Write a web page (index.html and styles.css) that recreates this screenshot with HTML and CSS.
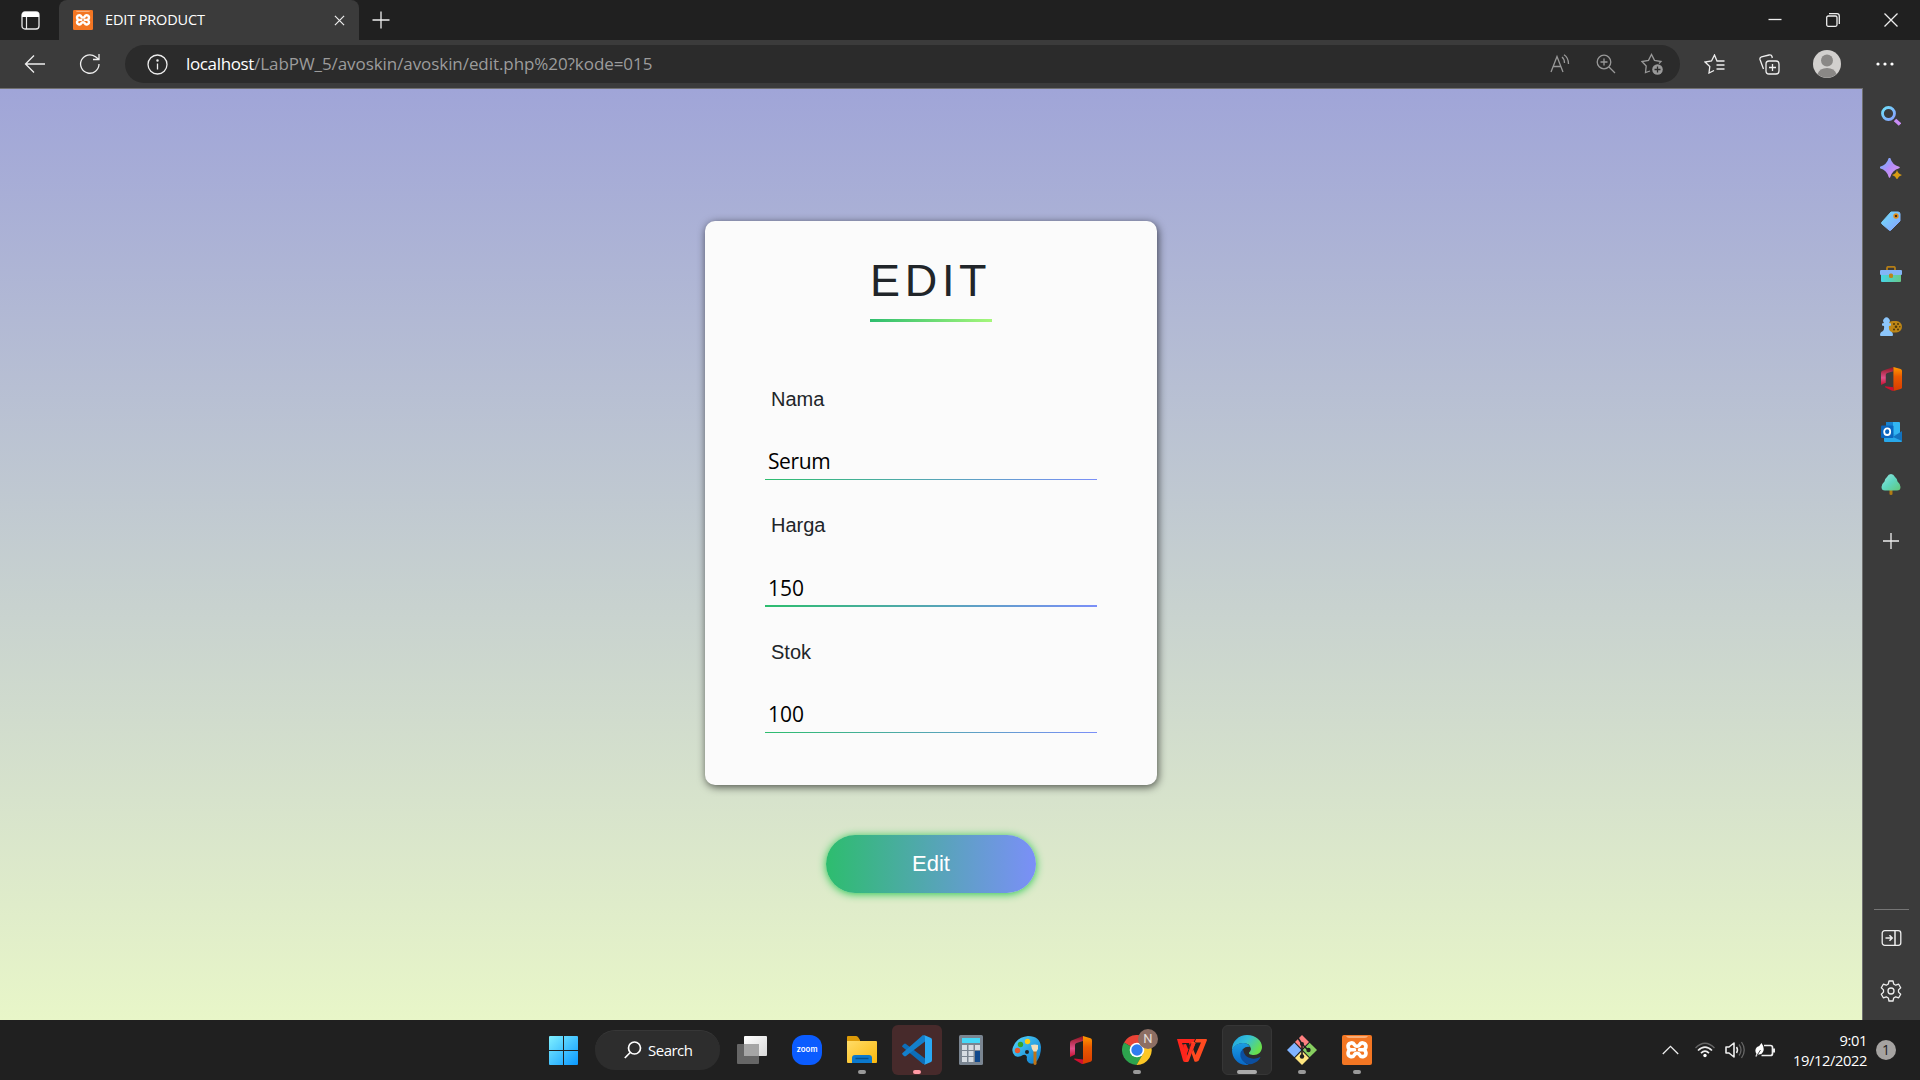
FILE: index.html
```html
<!DOCTYPE html>
<html lang="id">
<head>
<meta charset="utf-8">
<title>EDIT PRODUCT</title>
<link rel="stylesheet" href="styles.css">
</head>
<body>
<svg class="defs" width="0" height="0" aria-hidden="true">
  <defs>
    <linearGradient id="blue" x1="0" y1="0" x2="1" y2="1"><stop offset="0" stop-color="#6fe0fa"/><stop offset="1" stop-color="#88a0ff"/></linearGradient>
    <linearGradient id="violet" x1="0" y1="0" x2="1" y2="1"><stop offset="0" stop-color="#5cc0ff"/><stop offset=".5" stop-color="#b58cf8"/><stop offset="1" stop-color="#e09af0"/></linearGradient>
    <linearGradient id="teal" x1="0" y1="0" x2="1" y2="0"><stop offset="0" stop-color="#45d5e8"/><stop offset="1" stop-color="#67c98a"/></linearGradient>
    <linearGradient id="tree" x1="0" y1="0" x2="1" y2="1"><stop offset="0" stop-color="#9be8e0"/><stop offset=".5" stop-color="#5fd6c0"/><stop offset="1" stop-color="#62c878"/></linearGradient>
    <linearGradient id="office-left" x1="0" y1="0" x2="0" y2="1"><stop offset="0" stop-color="#8e1420"/><stop offset=".6" stop-color="#e0508a"/><stop offset="1" stop-color="#c8102e"/></linearGradient>
    <linearGradient id="office-right" x1="0" y1="0" x2="0" y2="1"><stop offset="0" stop-color="#ff9a00"/><stop offset=".4" stop-color="#ea5a00"/><stop offset="1" stop-color="#d83b01"/></linearGradient>
    <linearGradient id="win" x1="0" y1="0" x2="1" y2="1"><stop offset="0" stop-color="#80f0ff"/><stop offset="1" stop-color="#0a98ff"/></linearGradient>
    <linearGradient id="folder" x1="0" y1="0" x2="1" y2="1"><stop offset="0" stop-color="#ffdc68"/><stop offset="1" stop-color="#fbb80c"/></linearGradient>
    <linearGradient id="edge-top" x1="0" y1="0" x2="1" y2=".5"><stop offset="0" stop-color="#1b9de2"/><stop offset=".5" stop-color="#35c1d8"/><stop offset="1" stop-color="#68e04c"/></linearGradient>
    <linearGradient id="edge-low" x1="0" y1="0" x2="0" y2="1"><stop offset="0" stop-color="#1b9de2"/><stop offset="1" stop-color="#0868c8"/></linearGradient>
    <linearGradient id="paint" x1="0" y1="0" x2="1" y2="1"><stop offset="0" stop-color="#56d8fb"/><stop offset="1" stop-color="#0878ce"/></linearGradient>
    <linearGradient id="pane" x1="0" y1="0" x2="1" y2="1"><stop offset="0" stop-color="#fff"/><stop offset="1" stop-color="#d8d8d8"/></linearGradient>
    <symbol id="office" viewBox="0 0 22 28">
      <path d="M13 0 1.500 4.500Q0 5 0 7v14l5-2.500V9q0-1.500 1.500-2L13 5z" fill="url(#office-left)"/>
      <path d="M13 0l7.500 2.300Q22 2.800 22 4.500v19q0 1.700-1.500 2.200L13 28V0z" fill="url(#office-right)"/>
      <path d="M4.500 22.500 13 23.500V28q-1 0-2-.5l-6.300-3.700q-1.200-.8-.2-1.300z" fill="#d01030"/>
    </symbol>
    <symbol id="xampp" viewBox="0 0 30 30">
      <rect width="30" height="30" rx="2" fill="#f37623"/><path d="M4 1h22q-1 2-3 2H7Q5 3 4 1z" fill="#f8ad78"/>
      <path d="M12.500 14.800H9.500a3.400 3.400 0 1 1 3-4.900q.8 1.400 2.500 1.400t2.500-1.400a3.400 3.400 0 1 1 3 4.900h-3 3a3.400 3.400 0 1 1-3 4.900q-.8-1.400-2.500-1.400t-2.500 1.400a3.400 3.400 0 1 1-3-4.900" fill="none" stroke="#fff" stroke-width="3.600" stroke-linejoin="round" stroke-linecap="round"/>
    </symbol>
  </defs>
</svg>

<header class="titlebar">
  <div class="workspace"><svg width="19" height="19" viewBox="0 0 19 19"><rect x="1" y="1" width="17" height="17" rx="3" fill="none" stroke="#e8e8e8" stroke-width="1.300"/><path d="M1 6V4q0-3 3-3h11q3 0 3 3v2z" fill="#fff"/><path d="M5.500 6v12" stroke="#e8e8e8" stroke-width="1.200"/></svg></div>
  <div class="tab">
    <svg width="20" height="20"><use href="#xampp"/></svg>
    <span class="tab-title">EDIT PRODUCT</span>
    <svg class="line" width="11" height="11" viewBox="0 0 12 12"><path d="M1 1l10 10M11 1 1 11"/></svg>
  </div>
  <div class="new-tab"><svg class="line" width="18" height="18" viewBox="0 0 18 18"><path d="M9 .5v17M.5 9h17"/></svg></div>
  <div class="window-buttons">
    <svg class="line" width="14" height="14" viewBox="0 0 14 14"><path d="M.5 6.500h13"/></svg>
    <svg class="line" width="14" height="14" viewBox="0 0 14 14"><rect x=".7" y="3" width="10.300" height="10.300" rx="1.500"/><path d="M3 .7h8q2.300 0 2.300 2.300v8"/></svg>
    <svg class="line" width="14" height="14" viewBox="0 0 14 14"><path d="M.5.5l13 13M13.500.5l-13 13"/></svg>
  </div>
</header>

<nav class="toolbar">
  <div class="nav-button"><svg class="line" width="22" height="20" viewBox="0 0 22 20"><path d="M21 10H1.500M10 1.500 1.500 10l8.500 8.500"/></svg></div>
  <div class="nav-button"><svg class="line" width="22" height="22" viewBox="0 0 22 22"><path d="M20 11A9.200 9.200 0 1 1 16.500 3.800L20 6.500M20 1v5.500h-6"/></svg></div>
  <div class="address">
    <svg class="line" width="21" height="21" viewBox="0 0 21 21"><circle cx="10.500" cy="10.500" r="9.500"/><path d="M10.500 9.500v6"/><circle cx="10.500" cy="6.500" r=".6"/></svg>
    <span class="url"><b>localhost</b>/LabPW_5/avoskin/avoskin/edit.php%20?kode=015</span>
    <div class="address-tools">
      <svg class="line" width="20" height="20" viewBox="0 0 20 20"><path d="M1 18 7 2.500 13 18M3 12.500h8M12 3q2.500 2 2.500 6M14 .8q4.500 3 4.500 9.200"/></svg>
      <svg class="line" width="20" height="20" viewBox="0 0 20 20"><circle cx="8" cy="8" r="6.800"/><path d="M13 13l6 6M8 4.500v7M4.500 8h7"/></svg>
      <svg class="line" width="22" height="22" viewBox="0 0 22 22"><path d="M9 18 4.500 19.500l.7-6.500L1 8.500 7.500 7.300 10.500 1.500 13.500 7.300 20 8.500 18 10.500"/><circle cx="16.500" cy="16.500" r="5.300" fill="#999" stroke="none"/><path d="M16.500 13.500v6M13.500 16.500h6" stroke="#2b2b2b"/></svg>
    </div>
  </div>
  <div class="nav-button"><svg class="line" width="21" height="20" viewBox="0 0 21 20"><path d="M10 16.500 5 19l.8-6.500L1 8l6.500-1L10.500 1 13 7h7.500M12.500 11h8M12.500 15h8"/></svg></div>
  <div class="nav-button"><svg class="line" width="21" height="21" viewBox="0 0 21 21"><rect x="7" y="7" width="13" height="13" rx="3"/><path d="M13.500 10v7M10 13.500h7M4.500 15 1 5.500q-.5-2 1.500-2.700L10 1q2.500-.5 3 1.500l.3 1.500"/></svg></div>
  <div class="nav-button profile"><svg width="28" height="28" viewBox="0 0 28 28"><circle cx="14" cy="14" r="14" fill="#d2d0ce"/><circle cx="14" cy="10.500" r="6" fill="#8a8886"/><path d="M4.500 24q2-6 9.500-6t9.500 6a14 14 0 0 1-19 0z" fill="#8a8886"/></svg></div>
  <div class="nav-button"><svg width="18" height="4" viewBox="0 0 18 4" fill="#fff"><circle cx="2" cy="2" r="1.600"/><circle cx="9" cy="2" r="1.600"/><circle cx="16" cy="2" r="1.600"/></svg></div>
</nav>

<div class="content">
  <main class="page">
    <form class="edit-form">
      <section class="card">
        <h1 class="card-title">EDIT</h1>
        <div class="title-rule"></div>
        <div class="fields">
          <div class="field"><label for="nama">Nama</label><input id="nama" type="text" value="Serum"><i class="rule"></i></div>
          <div class="field focused"><label for="harga">Harga</label><input id="harga" class="number" type="text" value="150"><i class="rule"></i></div>
          <div class="field"><label for="stok">Stok</label><input id="stok" class="number" type="text" value="100"><i class="rule"></i></div>
        </div>
      </section>
      <button class="submit" type="button">Edit</button>
    </form>
  </main>
  <aside class="sidebar">
    <div class="side-item"><svg width="20" height="20" viewBox="0 0 20 20"><path d="M14 14l5 4.500" stroke="#c98cf5" stroke-width="3.600"/><circle cx="7.500" cy="7.500" r="6" fill="none" stroke="url(#blue)" stroke-width="2.800"/></svg></div>
    <div class="side-item"><svg width="22" height="21" viewBox="0 0 22 21"><path d="M9.500 0q2 7.500 9.500 9.500-7.500 2-9.500 9.500Q7.500 11.500 0 9.500 7.500 7.500 9.500 0z" fill="url(#violet)" stroke="url(#violet)" stroke-width="1.500" stroke-linejoin="round"/><path d="M17 12q1 4 5 5-4 1-5 5-1-4-5-5 4-1 5-5z" fill="#d89b12"/></svg></div>
    <div class="side-item"><svg width="20" height="20" viewBox="0 0 20 20"><path d="M10 1h7q2 0 2 2v7L10 19q-1 1-2 0L1 13q-1-1 0-2z" fill="url(#blue)" stroke="url(#blue)"/><circle cx="15" cy="5" r="2" fill="#51310b" stroke="#e79018" stroke-width="1.400"/></svg></div>
    <div class="side-item"><svg width="22" height="16" viewBox="0 0 22 16"><path d="M7 4V2q0-1.200 1.500-1.200h5Q15 .8 15 2v2" fill="none" stroke="#b47d17" stroke-width="1.800"/><path d="M1 8h20v7q0 1-1 1H2q-1 0-1-1z" fill="url(#teal)"/><rect y="4" width="22" height="5" rx="1" fill="#83b5f7"/><rect x="9" y="7.500" width="4" height="4.500" rx="1.500" fill="#bc8618"/></svg></div>
    <div class="side-item"><svg width="22" height="19" viewBox="0 0 22 19"><rect x="7" y="4" width="15" height="11.500" rx="5.700" fill="#bd8616"/><g fill="#503808"><circle cx="16" cy="9.700" r="1.300"/><circle cx="14" cy="7" r="1"/><circle cx="18" cy="7" r="1"/><circle cx="14" cy="12.500" r="1"/><circle cx="18" cy="12.500" r="1"/><circle cx="19.800" cy="9.700" r=".8"/></g><path d="M0 18q0-3 3-4 1.500-2 1-5L2 8.500V6.500L4 6a3.300 3.300 0 1 1 5 0l2 .5v2L9 9q-.5 3 1 5 3 1 3 4 0 1-1 1H1q-1 0-1-1z" fill="#8cc6fb"/></svg></div>
    <div class="side-item"><svg width="21" height="24" viewBox="0 0 22 28" preserveAspectRatio="none"><use href="#office" width="22" height="28"/></svg></div>
    <div class="side-item"><svg width="21" height="20" viewBox="0 0 21 20"><rect x="5" width="14" height="12" rx="1" fill="#32b5f2"/><path d="M5 0h7v6H5z" fill="#1682d0"/><path d="M3 12h18v7q0 1-1 1H4q-1 0-1-1z" fill="#28a8ea"/><path d="M12 15l9-6v10z" fill="#1272be"/><rect y="3.500" width="12.500" height="12.500" rx="1" fill="#0b65bd"/><ellipse cx="6.200" cy="9.700" rx="3" ry="3.300" fill="none" stroke="#fff" stroke-width="1.800"/></svg></div>
    <div class="side-item"><svg width="20" height="21" viewBox="0 0 20 21"><path d="M8.500 15h3v5q0 1-1.500 1t-1.500-1z" fill="#b17b12"/><path d="M10 0q2.500 0 4 3 2.500 2 2.500 4.500Q19.500 10 19.500 13q0 3.500-3.500 3.500H4Q.5 16.500.5 13q0-3 3-5.500Q3.500 5 6 3q1.500-3 4-3z" fill="url(#tree)"/></svg></div>
    <div class="side-item add"><svg class="line" width="16" height="16" viewBox="0 0 16 16"><path d="M8 0v16M0 8h16"/></svg></div>
    <div class="side-bottom">
      <div class="side-item"><svg class="line" width="21" height="16" viewBox="0 0 20 16"><rect x=".7" y=".7" width="18.600" height="14.600" rx="2.500"/><path d="M13.500 1v14M4 8h6.500M8 5.300 10.700 8 8 10.700" stroke-width="1.500"/></svg></div>
      <div class="side-item"><svg class="line" width="22" height="22" viewBox="0 0 22 22"><path d="M9 1h4l.7 3 2 1.200 3-1 2 3.500-2.200 2.200v2.200l2.200 2.200-2 3.500-3-1-2 1.200-.7 3H9l-.7-3-2-1.200-3 1-2-3.500 2.200-2.200V9.900L1.300 7.700l2-3.500 3 1 2-1.200z" stroke-linejoin="round"/><circle cx="11" cy="11" r="3"/></svg></div>
    </div>
  </aside>
</div>

<footer class="taskbar">
  <div class="start"><svg width="29" height="29" viewBox="0 0 29 29"><path d="M1 0h13v14H0V1q0-1 1-1zM15 0h13q1 0 1 1v13H15zM0 15h14v14H1q-1 0-1-1zM15 15h14v13q0 1-1 1H15z" fill="url(#win)"/></svg></div>
  <div class="search"><svg width="18" height="18" viewBox="0 0 18 18" fill="none" stroke="#fff" stroke-width="1.700"><circle cx="10.500" cy="7" r="6"/><path d="M6.200 11.500.8 17"/></svg><span>Search</span></div>
  <div class="apps">
    <div class="app"><svg width="30" height="28" viewBox="0 0 30 28"><rect y="8" width="22" height="20" rx="1" fill="#666"/><rect x="7" width="23" height="20" rx="1" fill="url(#pane)"/><path d="M7 8h15v12H7z" fill="#a5a5a5"/></svg></div>
    <div class="app"><svg width="30" height="30" viewBox="0 0 30 30"><rect width="30" height="30" rx="12" fill="#0b5cff"/><text x="15" y="17" class="zoom-word" text-anchor="middle" textLength="21" lengthAdjust="spacingAndGlyphs">zoom</text></svg></div>
    <div class="app"><svg width="30" height="28" viewBox="0 0 30 28"><path d="M0 1q0-1 1-1h8q1 0 2 1l2 3v5H0z" fill="#dc9a08"/><path d="M0 5h29q1 0 1 1v20q0 1-1 1H1q-1 0-1-1z" fill="url(#folder)"/><path d="M5 27v-5q0-3 3-3h14q3 0 3 3v5z" fill="#0b79cd"/><path d="M8.500 22.500h13" stroke="#05508c" stroke-width="1.500"/></svg><i class="mark"></i></div>
    <div class="app alert"><svg width="30" height="30" viewBox="0 0 30 30"><path d="M.5 10.500 2 9q1-.8 2 0L23 23.500V29L21 29 .5 12q-.8-.8 0-1.500z" fill="#0d6eb8"/><path d="M.5 19.500 2 21q1 .8 2 0L23 6.500V1L21 0 .5 18q-.8.8 0 1.500z" fill="#1480cc"/><path d="M22 0l7 3q1 .5 1 2v20q0 1.500-1 2l-7 3q1-1 1-3V3q0-2-1-3z" fill="#29a8f4"/></svg><i class="mark"></i></div>
    <div class="app calculator"><svg width="24" height="30" viewBox="0 0 24 30"><rect width="24" height="30" rx="1.500" fill="#7a8591"/><path d="M3 3h18v5H3z" fill="#45d8f8"/><path d="M3 10h5v5H3zM9.500 10h5v5h-5zM16 10h5v5h-5zM3 16h5v5H3zM9.500 16h5v5h-5zM3 22h5v5H3zM9.500 22h5v5h-5z" fill="#d7dde3"/><path d="M16 16h5v11h-5z" fill="#11498c"/></svg></div>
    <div class="app"><svg width="30" height="30" viewBox="0 0 30 30"><path d="M16 1q12 0 13 11 0 8-4 14-3 4-8 2-3-2-2-6-1-3-4-2-4 3-8 1-4-4-2-9Q5 2 16 1z" fill="url(#paint)"/><circle cx="15.500" cy="6.500" r="2.700" fill="#ffcd12"/><circle cx="8.500" cy="9.500" r="2.700" fill="#35a52c"/><circle cx="5.500" cy="15.500" r="2.700" fill="#e8582c"/><circle cx="15" cy="17" r="2" fill="#202020"/><path d="M21.500 16h3v13q-1.500 2-3 0z" fill="#bf7416"/><path d="M19 10q4-1 7 0v4l-1.500 2.500h-3L20 14z" fill="#f3dfba"/></svg></div>
    <div class="app office-app"><svg width="22" height="28"><use href="#office"/></svg></div>
    <div class="app"><svg width="30" height="30" viewBox="0 0 30 30"><path d="M15 15 2 7.500A15 15 0 0 1 28 7.500z" fill="#ea4335"/><path d="M15 15 2 7.500A15 15 0 0 0 14.500 30l6-10z" fill="#2da44e"/><path d="M15 8h13a15 15 0 0 1-13.500 22l7-12z" fill="#fcc726"/><circle cx="15" cy="15" r="7.300" fill="#fff"/><circle cx="15" cy="15" r="5.700" fill="#2f7cf0"/></svg><span class="account">N</span><i class="mark"></i></div>
    <div class="app"><svg width="30" height="23" viewBox="0 0 30 23"><path d="M0 0h18l-1.500 3.500H14L9.500 16 6 5.500 9 5l2.500 6L13 7 12 4H5l7 16-2 3H8q-1.500 0-2-1.500z" fill="#ff241c"/><path d="M14 3h5l-4.500 11 3 8.500q1 .5 2.500 0 1.500-.5 2-1.500L30 1q0-1-1-1H19l-1.500 3.500H24L18.500 16l-2-5z" fill="#ff4a20"/><path d="M14.500 4h4L12 21.500q-.5 1.500-2 1.500H8z" fill="#ff3520"/></svg></div>
    <div class="app active"><svg width="30" height="30" viewBox="0 0 30 30"><path d="M0 15C0 6 7 0 15 0c9 0 15 6 15 12 0 5-4 8-8 8-4 0-5-1-5-2s2-2 2-4q-1-6-8-6Q4 8 0 15z" fill="url(#edge-top)"/><path d="M0 15Q3 8 11 8q5 0 7 4-4-1-7 2-3 4-1 9 2 5 7 7C7 31 0 24 0 15z" fill="url(#edge-low)"/><path d="M11 14q-5 5-1 11 4 5 10 4 6-2 8.500-6.500-.5-.8-1.500 0-3 1.500-7 1-8-1-9-9.500z" fill="#0c4fa0"/></svg><i class="mark"></i></div>
    <div class="app"><svg width="30" height="30" viewBox="0 0 30 30"><path d="M15 0l7 7-7 7-7-7z" fill="#ff8080"/><path d="M7.300 7.700l7 7.300-7 7.300L0 15z" fill="#80b3ff"/><path d="M22.700 7.700 30 15l-7.300 7.300-7-7.300z" fill="#87cf60"/><path d="M15 16l7 7-7 7-7-7z" fill="#ffe680"/><path d="M11 3l4 6v12M15 9l6 6" fill="none" stroke="#202020" stroke-width="1.600"/><g fill="#202020"><circle cx="15" cy="9" r="2"/><circle cx="21.500" cy="15" r="2.200"/><circle cx="15" cy="21.500" r="2.200"/></g></svg><i class="mark"></i></div>
    <div class="app"><svg width="30" height="30"><use href="#xampp"/></svg><i class="mark"></i></div>
  </div>
  <div class="tray">
    <svg class="line chevron" width="17" height="10" viewBox="0 0 17 10"><path d="M.8 9 8.500 1.300 16.200 9"/></svg>
    <svg class="line wifi" width="20" height="16" viewBox="0 0 20 16"><path d="M.5 6q9.500-9.500 19 0" stroke="#666"/><path d="M3 8.500q7-7 14 0M6 11.200q4-4 8 0" stroke-width="1.700"/><circle cx="10" cy="13.500" r="1.700" fill="#fff" stroke="none"/></svg>
    <svg class="line sound" width="20" height="18" viewBox="0 0 20 18"><path d="M1 6h3l5-4v14l-5-4H1z" stroke-width="1.600" stroke-linejoin="round"/><path d="M11.500 6q2 3 0 6" stroke-width="1.500"/><path d="M14 3.500q4 5.500 0 11M16.500 1q5.500 8 0 16" stroke="#666"/></svg>
    <svg class="line battery" width="20" height="15" viewBox="0 0 20 15"><path d="M9 2.500h6.500q2 0 2 2v6q0 2-2 2H6.500" stroke-width="1.700"/><path d="M19 5.500v4" stroke-width="2"/><path d="M6.500 0q3.500 5 1.500 9-1.500 3-5 2.500L1 14q-1-1 .5-3Q-1 7 2 4q3-1 4.500-4z" fill="#fff" stroke="none"/><path d="M2 12.500l3.500-5.500" stroke="#202020" stroke-width=".8"/></svg>
    <div class="clock"><span>9:01</span><span>19/12/2022</span></div>
    <span class="notice">1</span>
  </div>
</footer>
</body>
</html>
```
FILE: styles.css
```css
* { box-sizing: border-box; }
body {
  margin: 0;
  width: 1920px;
  height: 1080px;
  overflow: hidden;
  display: flex;
  flex-direction: column;
  background: #3b3b3b;
  color: #fff;
  font-family: "Open Sans", "Noto Sans", sans-serif;
}
svg { display: block; flex: none; }
.defs { position: absolute; }
.line { fill: none; stroke: #eee; stroke-width: 1.3; }

/* Window title bar */
.titlebar { height: 40px; flex: none; display: flex; background: #202020; }
.workspace { width: 59px; padding-left: 1px; display: flex; align-items: center; justify-content: center; }
.tab {
  width: 300px;
  padding: 0 14px;
  display: flex;
  align-items: center;
  background: #3b3b3b;
  border-radius: 8px 8px 0 0;
}
.tab-title { margin-left: 12px; padding-bottom: 2px; flex: 1; font-size: 14.5px; letter-spacing: -0.15px; white-space: nowrap; }
.new-tab { width: 43px; display: flex; align-items: center; justify-content: center; }
.window-buttons { margin-left: auto; padding-right: 22px; display: flex; align-items: center; gap: 44px; }

/* Navigation toolbar */
.toolbar { height: 48px; flex: none; display: flex; align-items: center; padding: 0 7px; }
.nav-button { width: 55px; display: flex; align-items: center; justify-content: center; }
.profile { width: 60px; }
.address {
  width: 1555px;
  height: 38px;
  margin: 0 7px 0 8px;
  padding: 0 5px 0 22px;
  display: flex;
  align-items: center;
  background: #2b2b2b;
  border-radius: 19px;
}
.url { margin-left: 18px; padding-bottom: 2px; flex: 1; font-size: 17px; letter-spacing: -0.07px; color: #9c9c9c; white-space: nowrap; }
.url b { color: #fff; font-weight: 400; letter-spacing: -0.35px; }
.address-tools { display: grid; grid-template-columns: repeat(3, 46px); align-items: center; justify-items: center; }
.address-tools .line { stroke: #999; }

/* Page area and sidebar */
.content { height: 932px; flex: none; display: grid; grid-template-columns: 1863px 57px; }
.page {
  border-top: 1px solid #707070;
  border-right: 1px solid #707070;
  background: linear-gradient(#a0a5d8, #e8f6c8);
  font-family: "Liberation Sans", Arial, sans-serif;
}
.edit-form { padding-top: 132px; display: flex; flex-direction: column; align-items: center; }
.card {
  width: 452px;
  height: 564px;
  padding: 35px 60px 0;
  border-radius: 10px;
  background: #fbfbfb;
  box-shadow: 1px 2px 8px rgba(0, 0, 0, .65);
  color: #212529;
  display: flex;
  flex-direction: column;
  align-items: center;
}
.card-title { margin: 0; padding: 0 0 13px; width: 122px; font-size: 45px; font-weight: 400; line-height: 50px; letter-spacing: 4.7px; white-space: nowrap; }
.title-rule { width: 122px; height: 3px; background: linear-gradient(to right, #2dbd6e, #a6f77b); }
.fields { margin-top: 65px; align-self: stretch; display: flex; flex-direction: column; gap: 32px; }
.field { height: 94px; display: flex; flex-direction: column; }
.field:last-child { margin-top: 1px; }
.field label { padding-left: 6px; font-size: 20px; line-height: 24px; }
.field input {
  height: 30px;
  margin: 35px 0 3px;
  padding: 0 2px 0 3px;
  border: 0;
  outline: 0;
  background: none;
  color: #000;
  font: 21px/30px "Open Sans", "Noto Sans", sans-serif;
  letter-spacing: -0.4px;
}
.field .number { letter-spacing: 0; }
.rule { height: 1px; background: linear-gradient(to right, #2dbd6e, #7b8ff8); }
.focused input { margin: 36px 0 2px; }
.focused .rule { height: 2px; }
.submit {
  width: 210px;
  height: 58px;
  margin-top: 50px;
  padding: 0;
  border: 0;
  border-radius: 29px;
  background: linear-gradient(to right, #2dbd6e, #7b8ff8);
  box-shadow: 0 1px 8px #24c64f;
  color: #fff;
  font: 22px "Liberation Sans", Arial, sans-serif;
}
.sidebar { padding: 2px 1px 0 0; display: flex; flex-direction: column; }
.side-item { height: 52.6px; display: flex; align-items: center; justify-content: center; }
.side-item.add { margin-top: 4px; }
.side-bottom { width: 35px; margin: auto auto 3px; padding-top: 2px; border-top: 1px solid #757575; }

/* Taskbar */
.taskbar { height: 60px; flex: none; display: flex; align-items: center; background: #202020; }
.start { margin-left: 549px; width: 46px; }
.search {
  width: 125px;
  height: 40px;
  padding: 0 0 1px 29px;
  display: flex;
  align-items: center;
  gap: 6px;
  border-radius: 20px;
  background: #2d2d2d;
  border-top: 1px solid #373737;
  font-size: 15px;
  letter-spacing: -0.5px;
}
.search span { padding-bottom: 1px; }
.apps { margin-left: 7px; display: flex; gap: 5px; }
.app { position: relative; width: 50px; height: 50px; border-radius: 6px; display: flex; align-items: center; justify-content: center; }
.app.alert { background: #472a2b; }
.app.active { background: #2d2d2d; border: 1px solid #363636; }
.calculator, .office-app { padding-right: 2px; }
.mark { position: absolute; bottom: 1px; left: 21px; width: 8px; height: 4px; border-radius: 2px; background: #999; }
.alert .mark { background: #ff99a4; }
.active .mark { bottom: 0; left: 14px; width: 20px; background: #aaa; }
.account { position: absolute; left: 26px; top: 4px; width: 20px; height: 20px; border-radius: 50%; background: #8d6e63; color: #e5dedb; font: 13px/20px Roboto, sans-serif; text-align: center; }
.zoom-word { fill: #fff; font: 600 7.5px Inter, sans-serif; }
.tray { margin-left: auto; display: flex; align-items: center; }
.wifi { margin-left: 16px; }
.sound { margin-left: 10px; }
.battery { margin-left: 10px; }
.clock { width: 92px; padding-bottom: 1px; display: flex; flex-direction: column; align-items: flex-end; font-size: 14.7px; line-height: 20px; letter-spacing: -0.4px; }
.notice { margin: 0 24px 0 9px; width: 20px; height: 20px; border-radius: 50%; background: #a5a3a1; color: #222; font-size: 14px; line-height: 20px; text-align: center; }
```
